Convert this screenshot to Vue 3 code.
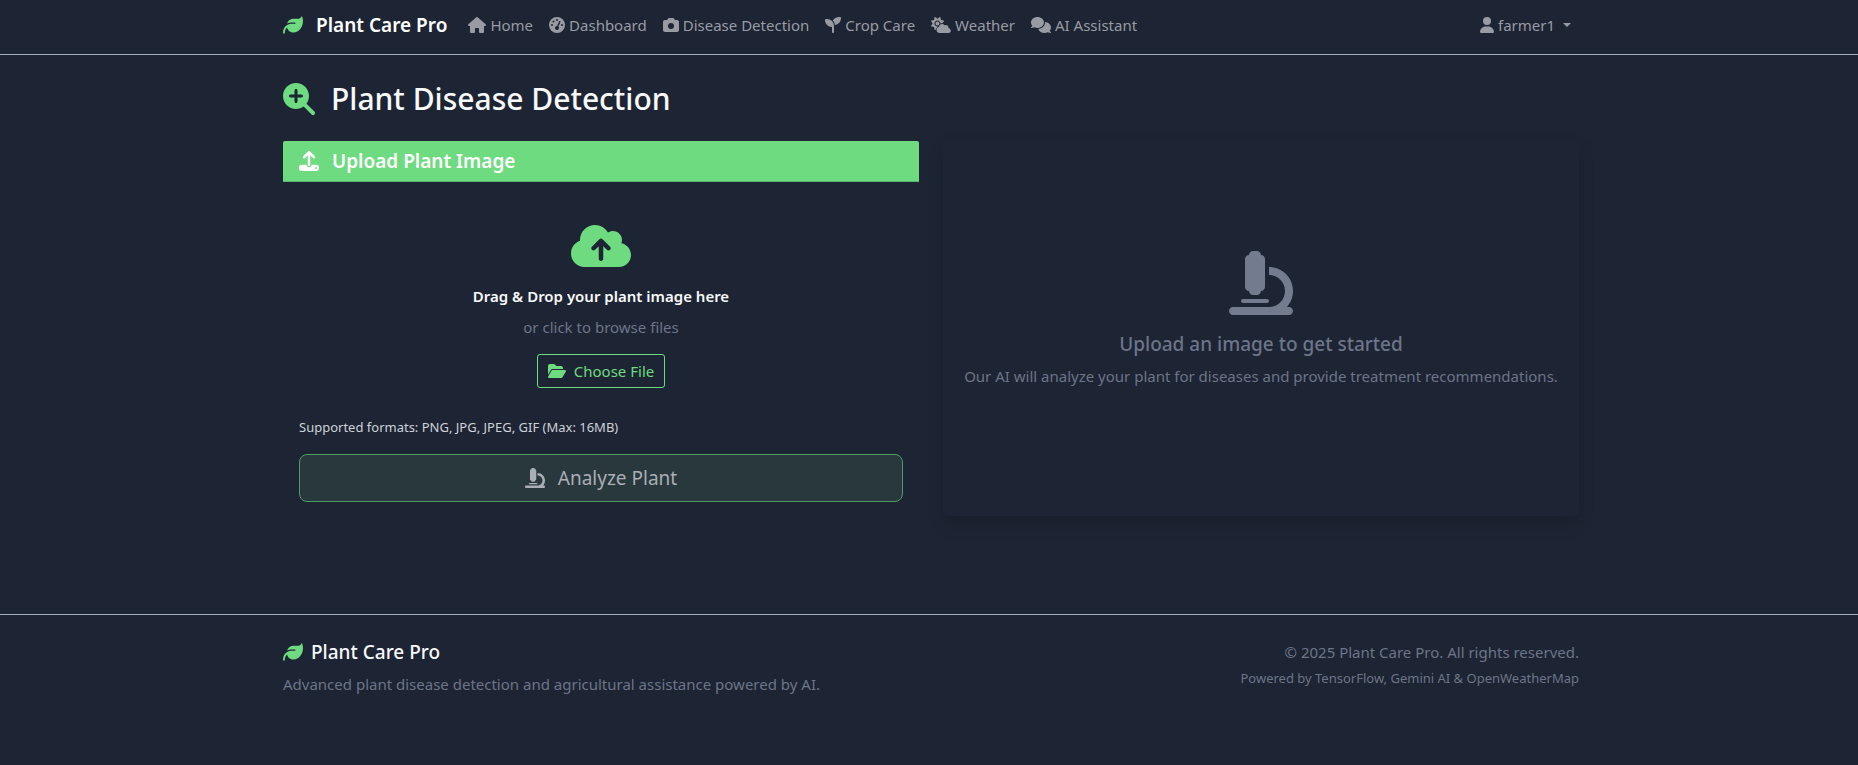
<script setup>
import { h, ref } from 'vue'

const icons = {
  leaf: [512, 'M272 96c-78.6 0-145.1 51.5-167.7 122.5c33.6-17 71.5-26.5 111.7-26.5h88c8.8 0 16 7.2 16 16s-7.2 16-16 16H288 216s0 0 0 0c-16.6 0-32.7 1.9-48.3 5.4c-25.9 5.9-49.9 16.4-71.4 30.7c0 0 0 0 0 0C38.3 298.8 0 364.9 0 440v16c0 13.3 10.7 24 24 24s24-10.7 24-24V440c0-48.7 20.7-92.5 53.8-123.2C121.6 392.3 190.3 448 272 448l1 0c132.1-.7 239-130.9 239-291.4c0-42.6-7.5-83.1-21.1-119.6c-2.6-6.9-12.7-6.6-16.2-.1C455.9 72.1 418.7 96 376 96L272 96z'],
  house: [576, 'M575.8 255.5c0 18-15 32.1-32 32.1h-32l.7 160.2c0 2.7-.2 5.4-.5 8.1V472c0 22.1-17.9 40-40 40H456c-1.1 0-2.2 0-3.3-.1c-1.4 .1-2.8 .1-4.2 .1H416 392c-22.1 0-40-17.9-40-40V448 384c0-17.7-14.3-32-32-32H256c-17.7 0-32 14.3-32 32v64 24c0 22.1-17.9 40-40 40H160 128.1c-1.5 0-3-.1-4.5-.2c-1.2 .1-2.4 .2-3.6 .2H104c-22.1 0-40-17.9-40-40V360c0-.9 0-1.9 .1-2.8V287.6H32c-18 0-32-14-32-32.1c0-9 3-17 10-24L266.4 8c7-7 15-8 22-8s15 2 21 7L564.8 231.5c8 7 12 15 11 24z'],
  gauge: [512, 'M0 256a256 256 0 1 1 512 0A256 256 0 1 1 0 256zM288 96a32 32 0 1 0 -64 0 32 32 0 1 0 64 0zM256 416c35.3 0 64-28.7 64-64c0-17.4-6.9-33.1-18.1-44.6L366 161.7c5.3-12.1-.2-26.3-12.3-31.6s-26.3 .2-31.6 12.3L257.9 288c-.6 0-1.3 0-1.9 0c-35.3 0-64 28.7-64 64s28.7 64 64 64zM176 144a32 32 0 1 0 -64 0 32 32 0 1 0 64 0zM96 288a32 32 0 1 0 0-64 32 32 0 1 0 0 64zm352-32a32 32 0 1 0 -64 0 32 32 0 1 0 64 0z'],
  camera: [512, 'M149.1 64.8L138.7 96H64C28.7 96 0 124.7 0 160V416c0 35.3 28.7 64 64 64H448c35.3 0 64-28.7 64-64V160c0-35.3-28.7-64-64-64H373.3L362.9 64.8C356.4 45.2 338.1 32 317.4 32H194.6c-20.7 0-39 13.2-45.5 32.8zM256 192a96 96 0 1 1 0 192 96 96 0 1 1 0-192z'],
  seedling: [512, 'M512 32c0 113.6-84.6 207.5-194.2 222c-7.1-53.4-30.6-101.6-65.3-139.3C290.8 46.3 364 0 448 0h32c17.7 0 32 14.3 32 32zM0 96C0 78.3 14.3 64 32 64H64c123.7 0 224 100.3 224 224v32V480c0 17.7-14.3 32-32 32s-32-14.3-32-32V320C100.3 320 0 219.7 0 96z'],
  cloudSun: [640, 'M294.2 1.2c5.1 2.1 8.7 6.7 9.6 12.1l14.1 84.7 84.7 14.1c5.4 .9 10 4.5 12.1 9.6s1.5 10.9-1.6 15.4l-38.5 55c-2.2-.1-4.4-.2-6.7-.2c-23.3 0-45.1 6.2-64 17.1l0-1.1c0-53-43-96-96-96s-96 43-96 96s43 96 96 96c8.1 0 15.9-1 23.4-2.9c-36.6 18.1-63.3 53.1-69.8 94.9l-24.4 17c-4.5 3.2-10.3 3.8-15.4 1.6s-8.7-6.7-9.6-12.1L98.1 317.9 13.4 303.8c-5.4-.9-10-4.5-12.1-9.6s-1.5-10.9 1.6-15.4L52.5 208 2.9 137.2c-3.2-4.5-3.8-10.3-1.6-15.4s6.7-8.7 12.1-9.6L98.1 98.1l14.1-84.7c.9-5.4 4.5-10 9.6-12.1s10.9-1.5 15.4 1.6L208 52.5 278.8 2.9c4.5-3.2 10.3-3.8 15.4-1.6zM144 208a64 64 0 1 1 128 0 64 64 0 1 1 -128 0zM639.9 431.9c0 44.2-35.8 80-80 80H271.9c-53 0-96-43-96-96c0-47.6 34.6-87 80-94.6l0-1.3c0-53 43-96 96-96c34.9 0 65.4 18.6 82.2 46.4c13-9.1 28.8-14.4 45.8-14.4c44.2 0 80 35.8 80 80c0 5.9-.6 11.7-1.9 17.2c37.4 6.7 65.8 39.4 65.8 78.7z'],
  comments: [640, 'M208 352c114.9 0 208-78.8 208-176S322.9 0 208 0S0 78.8 0 176c0 38.6 14.7 74.3 39.6 103.4c-3.5 9.4-8.7 17.7-14.2 24.7c-4.8 6.2-9.7 11-13.3 14.3c-1.8 1.6-3.3 2.9-4.3 3.7c-.5 .4-.9 .7-1.1 .8l-.2 .2C1 327.2-1.4 334.4 .8 340.9S9.1 352 16 352c21.8 0 43.8-5.6 62.1-12.5c9.2-3.5 17.8-7.4 25.2-11.4C134.1 343.3 169.8 352 208 352zM448 176c0 112.3-99.1 196.9-216.5 207C255.8 457.4 336.4 512 432 512c38.2 0 73.9-8.7 104.7-23.9c7.5 4 16 7.9 25.2 11.4c18.3 6.9 40.3 12.5 62.1 12.5c6.9 0 13.1-4.5 15.2-11.1c2.1-6.6-.2-13.8-5.8-17.9l-.2-.2c-.2-.2-.6-.4-1.1-.8c-1-.8-2.5-2-4.3-3.7c-3.6-3.3-8.5-8.1-13.3-14.3c-5.5-7-10.7-15.4-14.2-24.7c24.9-29 39.6-64.7 39.6-103.4c0-92.8-84.9-168.9-192.6-175.5c.4 5.1 .6 10.3 .6 15.5z'],
  user: [448, 'M224 256A128 128 0 1 0 224 0a128 128 0 1 0 0 256zm-45.7 48C79.8 304 0 383.8 0 482.3C0 498.7 13.3 512 29.7 512H418.3c16.4 0 29.7-13.3 29.7-29.7C448 383.8 368.2 304 269.7 304H178.3z'],
  searchPlus: [512, 'M416 208c0 45.9-14.9 88.3-40 122.7L502.6 457.4c12.5 12.5 12.5 32.8 0 45.3s-32.8 12.5-45.3 0L330.7 376c-34.4 25.2-76.8 40-122.7 40C93.1 416 0 322.9 0 208S93.1 0 208 0S416 93.1 416 208zM184 296c0 13.3 10.7 24 24 24s24-10.7 24-24V232h64c13.3 0 24-10.7 24-24s-10.7-24-24-24H232V120c0-13.3-10.7-24-24-24s-24 10.7-24 24v64H120c-13.3 0-24 10.7-24 24s10.7 24 24 24h64v64z'],
  upload: [512, 'M288 109.3V352c0 17.7-14.3 32-32 32s-32-14.3-32-32V109.3l-73.4 73.4c-12.5 12.5-32.8 12.5-45.3 0s-12.5-32.8 0-45.3l128-128c12.5-12.5 32.8-12.5 45.3 0l128 128c12.5 12.5 12.5 32.8 0 45.3s-32.8 12.5-45.3 0L288 109.3zM64 352H192c0 35.3 28.7 64 64 64s64-28.7 64-64H448c35.3 0 64 28.7 64 64v32c0 35.3-28.7 64-64 64H64c-35.3 0-64-28.7-64-64V416c0-35.3 28.7-64 64-64zM432 456a24 24 0 1 0 0-48 24 24 0 1 0 0 48z'],
  cloudUp: [640, 'M144 480C64.5 480 0 415.5 0 336c0-62.8 40.2-116.2 96.2-135.9c-.1-2.7-.2-5.4-.2-8.1c0-88.4 71.6-160 160-160c59.3 0 111 32.2 138.7 80.2C409.9 102 428.3 96 448 96c53 0 96 43 96 96c0 12.2-2.3 23.8-6.4 34.6C596 238.4 640 290.1 640 352c0 70.7-57.3 128-128 128H144zm79-217c-9.4 9.4-9.4 24.6 0 33.9s24.6 9.4 33.9 0l39-39V392c0 13.3 10.7 24 24 24s24-10.7 24-24V257.9l39 39c9.4 9.4 24.6 9.4 33.9 0s9.4-24.6 0-33.9l-80-80c-9.4-9.4-24.6-9.4-33.9 0l-80 80z'],
  folder: [576, 'M88.7 223.8L0 375.8V96C0 60.7 28.7 32 64 32H181.5c17 0 33.3 6.7 45.3 18.7l26.5 26.5c12 12 28.3 18.7 45.3 18.7H416c35.3 0 64 28.7 64 64v32H144c-22.8 0-43.8 12.1-55.3 31.8zm27.6 16.1C122.1 230 132.6 224 144 224H544c11.5 0 22 6.1 27.7 16.1s5.7 22.2-.1 32.1l-112 192C453.9 474 443.4 480 432 480H32c-11.5 0-22-6.1-27.7-16.1s-5.7-22.2 .1-32.1l112-192z'],
  microscope: [512, 'M160 32c0-17.7 14.3-32 32-32h32c17.7 0 32 14.3 32 32c17.7 0 32 14.3 32 32V288c0 17.7-14.3 32-32 32c0 17.7-14.3 32-32 32H192c-17.7 0-32-14.3-32-32c-17.7 0-32-14.3-32-32V64c0-17.7 14.3-32 32-32zM32 448H320c70.7 0 128-57.3 128-128s-57.3-128-128-128V128c106 0 192 86 192 192c0 49.2-18.5 94-48.9 128H480c17.7 0 32 14.3 32 32s-14.3 32-32 32H320 32c-17.7 0-32-14.3-32-32s14.3-32 32-32zm80-64H304c8.8 0 16 7.2 16 16s-7.2 16-16 16H112c-8.8 0-16-7.2-16-16s7.2-16 16-16z'],
}

const Icon = (props) => {
  const [width, path] = icons[props.name]
  return h('svg', {
    viewBox: `0 0 ${width} 512`,
    width: (width / 512) * props.size,
    height: props.size,
    fill: 'currentColor',
    'aria-hidden': 'true',
  }, [h('path', { d: path })])
}
Icon.props = { name: String, size: { type: Number, default: 16 } }

const links = [
  { icon: 'house', label: 'Home' },
  { icon: 'gauge', label: 'Dashboard' },
  { icon: 'camera', label: 'Disease Detection' },
  { icon: 'seedling', label: 'Crop Care' },
  { icon: 'cloudSun', label: 'Weather' },
  { icon: 'comments', label: 'AI Assistant' },
]

const picker = ref(null)
const file = ref(null)
const onPick = (event) => { file.value = event.target.files[0] || null }
const onDrop = (event) => { file.value = event.dataTransfer.files[0] || null }
</script>

<template>
  <div class="page">
    <header class="topbar">
      <nav class="container nav">
        <a class="brand" href="#"><Icon class="green" name="leaf" :size="20" />Plant Care Pro</a>
        <a v-for="link in links" :key="link.label" class="nav-link" href="#">
          <Icon :name="link.icon" />{{ link.label }}
        </a>
        <button class="nav-link account" type="button">
          <Icon name="user" />farmer1<span class="caret"></span>
        </button>
      </nav>
    </header>

    <main class="container main">
      <h1 class="title"><Icon class="green" name="searchPlus" :size="32" />Plant Disease Detection</h1>
      <div class="columns">
        <section class="card">
          <h2 class="card-header"><Icon name="upload" :size="20" />Upload Plant Image</h2>
          <div class="card-body">
            <div class="dropzone" @dragover.prevent @drop.prevent="onDrop">
              <Icon class="green" name="cloudUp" :size="48" />
              <p class="drop-title">Drag &amp; Drop your plant image here</p>
              <p class="muted drop-hint">or click to browse files</p>
              <button class="choose" type="button" @click="picker.click()">
                <Icon name="folder" />Choose File
              </button>
              <input ref="picker" type="file" accept="image/*" aria-label="Plant image" hidden @change="onPick" />
            </div>
            <p class="formats">Supported formats: PNG, JPG, JPEG, GIF (Max: 16MB)</p>
            <button class="analyze" type="button" :disabled="!file">
              <Icon name="microscope" :size="20" />Analyze Plant
            </button>
          </div>
        </section>
        <section class="card result">
          <Icon name="microscope" :size="64" />
          <h2 class="result-title">Upload an image to get started</h2>
          <p class="muted">Our AI will analyze your plant for diseases and provide treatment recommendations.</p>
        </section>
      </div>
    </main>

    <footer class="footer">
      <div class="container footer-row">
        <div>
          <h2 class="footer-brand"><Icon class="green" name="leaf" :size="20" />Plant Care Pro</h2>
          <p class="muted">Advanced plant disease detection and agricultural assistance powered by AI.</p>
        </div>
        <div class="legal">
          <p class="muted">© 2025 Plant Care Pro. All rights reserved.</p>
          <p class="muted small">Powered by TensorFlow, Gemini AI &amp; OpenWeatherMap</p>
        </div>
      </div>
    </footer>
  </div>
</template>

<style>
body {
  background: #1d2433;
}
</style>

<style scoped>
.page {
  min-height: 100vh;
  background: #1d2433;
  color: #f8f9fa;
  font: 400 15px/24px "Segoe UI", "Noto Sans", "Open Sans", sans-serif;
}
h1, h2, p {
  margin: 0;
}
svg {
  flex: none;
  display: block;
}
.container {
  box-sizing: border-box;
  max-width: 1324px;
  margin: 0 auto;
  padding: 0 12px 0 16px;
}
.green {
  color: #6edb80;
}
.muted {
  color: #6c7589;
}
.topbar {
  border-bottom: 1px solid #a0aec0;
}
.nav {
  display: flex;
  align-items: center;
  padding-top: 5px;
  padding-bottom: 9px;
}
.brand {
  display: flex;
  align-items: center;
  gap: 13px;
  margin-right: 13px;
  color: #fff;
  font-size: 19px;
  font-weight: 600;
  text-decoration: none;
  white-space: nowrap;
}
.nav-link {
  display: flex;
  align-items: center;
  gap: 4px;
  padding: 8px;
  color: #999ba3;
  text-decoration: none;
  white-space: nowrap;
}
.account {
  margin-left: auto;
  border: 0;
  background: none;
  font: inherit;
}
.caret {
  margin-left: 4px;
  border: 4px solid transparent;
  border-top-color: currentColor;
  border-bottom: 0;
}
.main {
  padding-top: 24px;
  padding-bottom: 96px;
}
.title {
  display: flex;
  align-items: center;
  gap: 16px;
  margin-bottom: 22px;
  font-size: 30px;
  font-weight: 500;
  line-height: 40px;
}
.columns {
  display: grid;
  grid-template-columns: 1fr 1fr;
  gap: 24px;
}
.card-header {
  display: flex;
  align-items: center;
  gap: 13px;
  padding: 8px 16px;
  border-bottom: 1px solid #5cb873;
  border-radius: 2px 2px 0 0;
  background: #6edb80;
  color: #fff;
  font-size: 19px;
  font-weight: 600;
}
.card-body {
  padding: 0 16px 16px;
}
.dropzone {
  display: flex;
  flex-direction: column;
  align-items: center;
  padding: 40px 0 29px;
}
.drop-title {
  margin: 14px 0 7px;
  font-weight: 600;
}
.drop-hint {
  margin-bottom: 15px;
}
.choose {
  display: flex;
  align-items: center;
  gap: 8px;
  padding: 4px 10px;
  border: 1px solid #6edb80;
  border-radius: 3px;
  background: none;
  color: #6edb80;
  font: inherit;
}
.formats {
  margin-bottom: 17px;
  color: #ced2d9;
  font-size: 13px;
  line-height: 20px;
}
.analyze {
  display: flex;
  align-items: center;
  justify-content: center;
  gap: 13px;
  width: 100%;
  padding: 11px 16px;
  border: 1px solid #4f9d62;
  border-radius: 8px;
  background: #28383d;
  color: #abaeb4;
  font: inherit;
  font-size: 19px;
}
.result {
  display: flex;
  flex-direction: column;
  align-items: center;
  justify-content: center;
  padding-bottom: 16px;
  border-radius: 6px;
  box-shadow: 0 8px 16px rgba(0, 0, 0, 0.15);
  color: #737b8f;
  text-align: center;
  transform: translateY(-2px);
}
.result-title {
  margin: 17px 0 8px;
  color: #6c7589;
  font-size: 19px;
  font-weight: 500;
}
.footer {
  border-top: 1px solid #a0aec0;
  padding: 25px 0;
}
.footer-row {
  display: flex;
  justify-content: space-between;
}
.footer-brand {
  display: flex;
  align-items: center;
  gap: 8px;
  margin-bottom: 8px;
  font-size: 19px;
  font-weight: 500;
}
.legal {
  text-align: right;
}
.small {
  margin-top: 4px;
  font-size: 13px;
  line-height: 20px;
}
</style>
